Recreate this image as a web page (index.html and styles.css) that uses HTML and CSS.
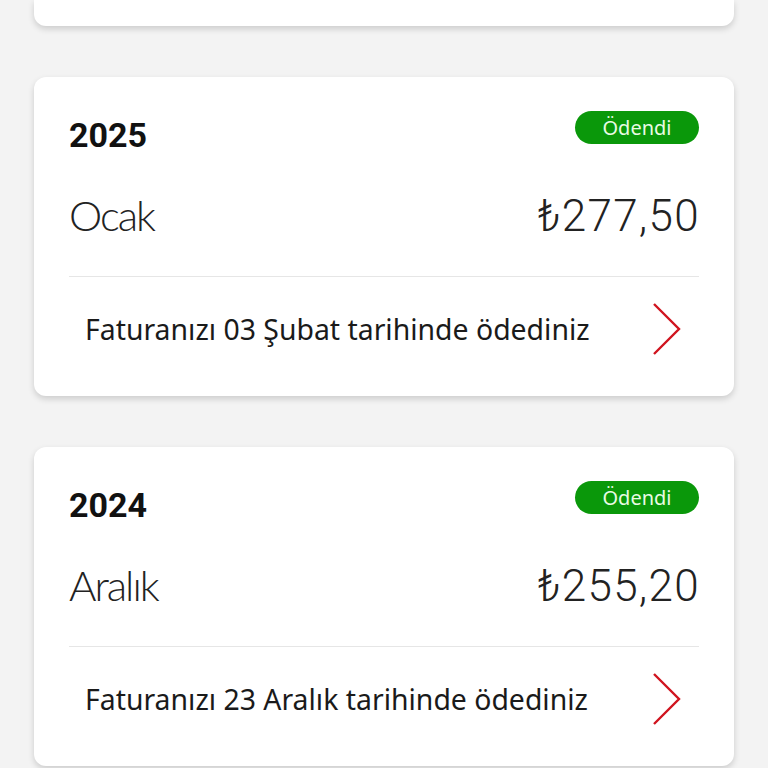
FILE: index.html
```html
<!DOCTYPE html>
<html lang="tr">
<head>
<meta charset="utf-8">
<link rel="stylesheet" href="styles.css">
</head>
<body>
<div class="list">
  <div class="card card-partial"></div>

  <div class="card">
    <div class="head">
      <div class="year">2025</div>
      <div class="badge">Ödendi</div>
    </div>
    <div class="month-row">
      <div class="month">Ocak</div>
      <div class="amount">₺277,50</div>
    </div>
    <div class="footer">
      <div class="note">Faturanızı 03 Şubat tarihinde ödediniz</div>
      <svg class="chev" width="30" height="54" viewBox="0 0 30 54"><polyline points="2,2 27,27 2,52" fill="none" stroke="#d0141f" stroke-width="2.4"/></svg>
    </div>
  </div>

  <div class="card">
    <div class="head">
      <div class="year">2024</div>
      <div class="badge">Ödendi</div>
    </div>
    <div class="month-row">
      <div class="month">Aralık</div>
      <div class="amount">₺255,20</div>
    </div>
    <div class="footer">
      <div class="note">Faturanızı 23 Aralık tarihinde ödediniz</div>
      <svg class="chev" width="30" height="54" viewBox="0 0 30 54"><polyline points="2,2 27,27 2,52" fill="none" stroke="#d0141f" stroke-width="2.4"/></svg>
    </div>
  </div>
</div>
</body>
</html>
```

FILE: styles.css
```css
html, body {
  margin: 0;
  padding: 0;
  background: #f3f3f3;
  width: 768px;
  height: 768px;
  overflow: hidden;
}

.list {
  display: flex;
  flex-direction: column;
  gap: 51px;
  padding: 0 34px;
}

.card {
  background: #ffffff;
  border-radius: 12px;
  box-shadow: 0 3px 6px rgba(0, 0, 0, 0.16);
  padding: 34px 35px 0 35px;
  height: 319px;
  box-sizing: border-box;
}

.card-partial {
  height: 26px;
  padding: 0;
  border-top-left-radius: 0;
  border-top-right-radius: 0;
}

.head {
  display: flex;
  justify-content: space-between;
  align-items: flex-start;
  height: 42px;
}

.year {
  font-family: Roboto, "Liberation Sans", sans-serif;
  font-weight: 700;
  font-size: 34px;
  line-height: 40px;
  margin-top: 4px;
  color: #111;
}

.badge {
  width: 124px;
  height: 33px;
  border-radius: 17px;
  background: #0a980a;
  color: #e9fbe4;
  font-family: "Noto Sans", "Open Sans", sans-serif;
  font-size: 20px;
  line-height: 33px;
  text-align: center;
}

.month-row {
  display: flex;
  justify-content: space-between;
  align-items: baseline;
  margin-top: 37px;
  height: 50px;
  border-bottom: 1px solid #e6e6e6;
  padding-bottom: 36px;
}

.month {
  font-family: Lato, Roboto, sans-serif;
  font-weight: 300;
  font-size: 42px;
  line-height: 50px;
  letter-spacing: -2px;
  color: #222;
}

.amount {
  font-family: Roboto, "Liberation Sans", sans-serif;
  font-weight: 300;
  font-size: 44px;
  line-height: 50px;
  letter-spacing: 1.3px;
  margin-right: -1px;
  color: #222;
}

.footer {
  display: flex;
  justify-content: space-between;
  align-items: center;
  height: 104px;
  padding: 0 17px 14px 16px;
}

.note {
  font-family: "Noto Sans", "Open Sans", sans-serif;
  font-size: 28.4px;
  color: #1a1a1a;
}

.chev {
  display: block;
}
```
